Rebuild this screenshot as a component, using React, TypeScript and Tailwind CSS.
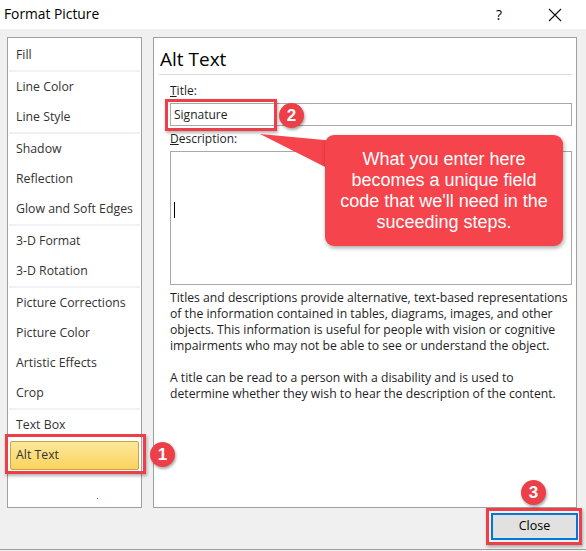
const ui = { fontFamily: '"Open Sans", "Noto Sans", sans-serif' }

const groups: string[][] = [
  ['Fill'],
  ['Line Color', 'Line Style'],
  ['Shadow', 'Reflection', 'Glow and Soft Edges'],
  ['3-D Format', '3-D Rotation'],
  ['Picture Corrections', 'Picture Color', 'Artistic Effects', 'Crop'],
  ['Text Box', 'Alt Text'],
]

const Badge = ({ n, className }: { n: string; className: string }) => (
  <div
    className={`absolute w-[25px] h-[25px] rounded-full bg-[#ec3f48] text-white flex items-center justify-center text-[17px] font-bold shadow-[1px_2px_3px_rgba(0,0,0,0.35)] ${className}`}
    style={{ fontFamily: '"Liberation Sans", Arial, sans-serif' }}
  >
    {n}
  </div>
)

const Highlight = ({ className }: { className: string }) => (
  <div className={`absolute border-[3px] border-[#ec3f48] shadow-[1px_2px_3px_rgba(0,0,0,0.3)] pointer-events-none ${className}`} />
)

export default function App() {
  return (
    <div className="relative w-[586px] h-[551px] bg-[#f0f0f0] overflow-hidden text-[#1e1e1e]" style={ui}>
      {/* title bar */}
      <div className="h-[29px] bg-white flex items-center pl-[4px] pr-[24px]">
        <span className="text-[13.8px] text-black">Format Picture</span>
        <span className="ml-auto text-[14px] text-black mr-[46px]">?</span>
        <svg width="14" height="14" viewBox="0 0 14 14" className="mt-[1px]">
          <path d="M1 1 L13 13 M13 1 L1 13" stroke="#111" strokeWidth="1.1" />
        </svg>
      </div>

      <div className="flex gap-[11px] px-[7px] pt-[8px]">
        {/* category list */}
        <div className="w-[135px] h-[471px] bg-white border border-[#a0a0a0] pt-[2px] relative">
          {groups.map((g, gi) => (
            <div key={gi}>
              {gi > 0 && <div className="h-[2px] mx-[1px] bg-[#f0f0f5]" />}
              {g.map((item) =>
                item === 'Alt Text' ? (
                  <div key={item} className="h-[30px] px-[2px] flex items-center">
                    <div className="w-full h-[29px] rounded-[2px] border border-[#c2a24a] bg-gradient-to-b from-[#fde89a] to-[#fbd35c] flex items-center pl-[5px] text-[12.3px] text-[#333]">
                      {item}
                    </div>
                  </div>
                ) : (
                  <div key={item} className="h-[30px] flex items-center pl-[8px] text-[12.3px] text-[#333] whitespace-nowrap">
                    {item}
                  </div>
                )
              )}
            </div>
          ))}
          <div className="absolute left-[89px] bottom-[8px] w-[1px] h-[1px] bg-[#ec3f48]" />
        </div>

        {/* detail pane */}
        <div className="w-[424px] h-[471px] bg-white border border-[#a0a0a0]">
          <div className="ml-[5px] mr-[4px] pt-[8px] pb-[2px] border-b border-[#dadada]">
            <div className="text-[19px] leading-[26px] text-black pl-[1px]">Alt Text</div>
          </div>
          <div className="pl-[16px] pr-[4px]">
            <div className="mt-[8px] text-[12px] leading-[16px]">
              <span className="underline">T</span>itle:
            </div>
            <div className="mt-[4px] h-[23px] border border-[#a9a9a9] flex items-center pl-[3px] text-[12px]">Signature</div>
            <div className="mt-[5px] text-[12px] leading-[16px]">
              <span className="underline">D</span>escription:
            </div>
            <div className="mt-[4px] h-[134px] border border-[#a9a9a9] pl-[3px] pt-[50px]">
              <div className="w-[1px] h-[16px] bg-black" />
            </div>
            <div className="mt-[5px] text-[12.2px] leading-[16px] whitespace-nowrap">
              Titles and descriptions provide alternative, text-based representations
              <br />
              of the information contained in tables, diagrams, images, and other
              <br />
              objects. This information is useful for people with vision or cognitive
              <br />
              impairments who may not be able to see or understand the object.
            </div>
            <div className="mt-[16px] text-[12.2px] leading-[16px] whitespace-nowrap">
              A title can be read to a person with a disability and is used to
              <br />
              determine whether they wish to hear the description of the content.
            </div>
          </div>
        </div>
      </div>

      {/* footer */}
      <div className="flex justify-end pr-[8px] pt-[5px]">
        <button className="w-[87px] h-[27px] bg-[#e1e1e1] border-2 border-[#0078d7] text-[12.5px] text-black">Close</button>
      </div>
      <div className="absolute left-0 right-0 bottom-[1px] h-[1px] bg-[#a0a0a0]" />

      {/* annotations */}
      <Highlight className="left-[5px] top-[434px] w-[141px] h-[40px]" />
      <Highlight className="left-[165px] top-[99px] w-[112px] h-[32px]" />
      <Highlight className="left-[486px] top-[508px] w-[96px] h-[37px]" />

      <svg className="absolute left-0 top-0 pointer-events-none" width="586" height="551">
        <polygon points="260,134 335,141 335,172" fill="#f5444b" />
      </svg>
      <div
        className="absolute left-[325px] top-[135px] w-[238px] h-[111px] rounded-[9px] bg-[#f5444b] shadow-[1px_2px_4px_rgba(0,0,0,0.35)] flex flex-col items-center justify-center text-white text-[18px] leading-[21px] text-center"
        style={{ fontFamily: '"Liberation Sans", Arial, sans-serif' }}
      >
        <span>What you enter here</span>
        <span>becomes a unique field</span>
        <span>code that we'll need in the</span>
        <span>suceeding steps.</span>
      </div>

      <Badge n="1" className="left-[150px] top-[442px]" />
      <Badge n="2" className="left-[279px] top-[103px]" />
      <Badge n="3" className="left-[521px] top-[480px]" />
    </div>
  )
}
